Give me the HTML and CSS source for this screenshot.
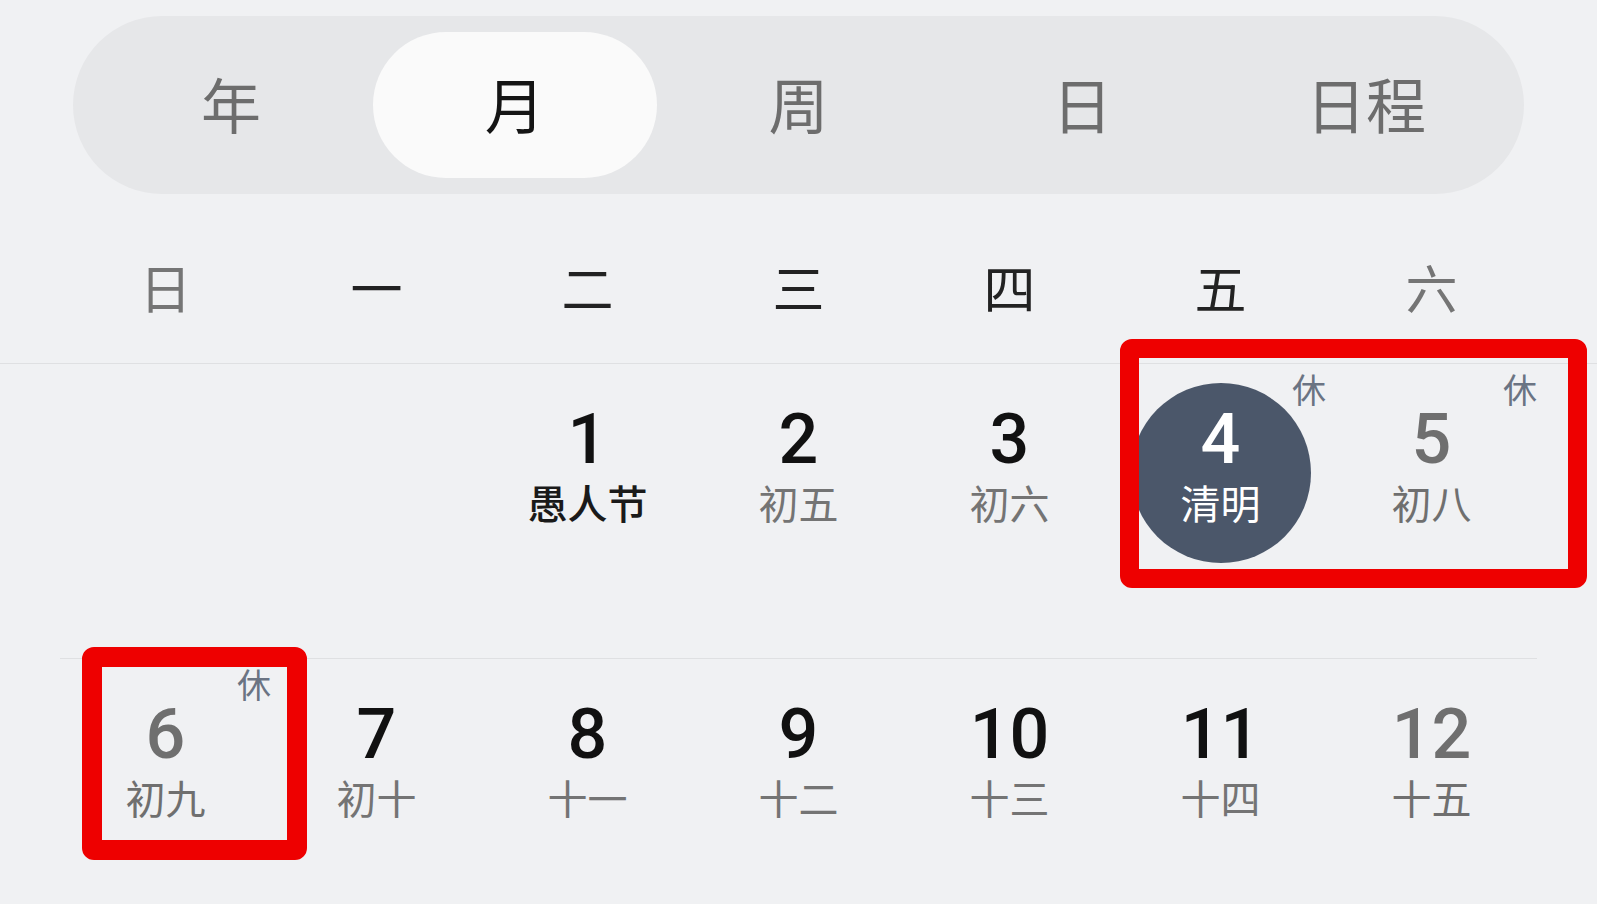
FILE: index.html
```html
<!DOCTYPE html>
<html lang="zh-CN">
<head>
<meta charset="utf-8">
<title>月视图</title>
<link rel="stylesheet" href="styles.css">
</head>
<body>
<div class="tabs">
  <div class="tab">年</div>
  <div class="tab active">月</div>
  <div class="tab">周</div>
  <div class="tab">日</div>
  <div class="tab">日程</div>
</div>

<div class="weekbar">
  <div class="weekdays">
    <span class="wk weekend">日</span>
    <span class="wk">一</span>
    <span class="wk">二</span>
    <span class="wk">三</span>
    <span class="wk">四</span>
    <span class="wk">五</span>
    <span class="wk weekend">六</span>
  </div>
</div>

<div class="weeks">
  <div class="week first">
    <div class="cell"></div>
    <div class="cell"></div>
    <div class="cell"><div class="day"><span class="num">1</span><span class="lunar fest">愚人节</span></div></div>
    <div class="cell"><div class="day"><span class="num">2</span><span class="lunar">初五</span></div></div>
    <div class="cell"><div class="day"><span class="num">3</span><span class="lunar">初六</span></div></div>
    <div class="cell"><span class="rest">休</span><div class="day today"><span class="num">4</span><span class="lunar">清明</span></div></div>
    <div class="cell weekend"><span class="rest">休</span><div class="day"><span class="num">5</span><span class="lunar">初八</span></div></div>
  </div>
  <div class="week last">
    <div class="cell weekend"><span class="rest">休</span><div class="day"><span class="num">6</span><span class="lunar">初九</span></div></div>
    <div class="cell"><div class="day"><span class="num">7</span><span class="lunar">初十</span></div></div>
    <div class="cell"><div class="day"><span class="num">8</span><span class="lunar">十一</span></div></div>
    <div class="cell"><div class="day"><span class="num">9</span><span class="lunar">十二</span></div></div>
    <div class="cell"><div class="day"><span class="num">10</span><span class="lunar">十三</span></div></div>
    <div class="cell"><div class="day"><span class="num">11</span><span class="lunar">十四</span></div></div>
    <div class="cell weekend"><div class="day"><span class="num">12</span><span class="lunar">十五</span></div></div>
  </div>
</div>

<div class="mark mark-a"></div>
<div class="mark mark-b"></div>
</body>
</html>
```

FILE: styles.css
```css
html, body {
  margin: 0;
  padding: 0;
}

body {
  position: relative;
  width: 1597px;
  height: 904px;
  overflow: hidden;
  background: #f0f1f3;
  font-family: "Noto Sans CJK SC", "Noto Sans", sans-serif;
  color: #111;
}

.tabs {
  margin: 16px 73px 0;
  height: 178px;
  padding: 16px;
  box-sizing: border-box;
  display: grid;
  grid-template-columns: repeat(5, 1fr);
  background: #e6e7e9;
  border-radius: 89px;
}

.tab {
  line-height: 142px;
  padding-bottom: 4px;
  text-align: center;
  font-size: 60px;
  color: #6d6d6d;
  border-radius: 73px;
}

.tab.active {
  background: #fafafa;
  color: #151515;
}

.weekbar {
  padding: 24px 60px 0;
  border-bottom: 1px solid #dfe0e2;
}

.weekdays {
  display: grid;
  grid-template-columns: repeat(7, 1fr);
  line-height: 137px;
  padding-bottom: 8px;
  font-size: 52px;
  text-align: center;
}

.wk {
  color: #222;
}

.wk.weekend {
  color: #757575;
}

.weeks {
  padding: 0 60px;
}

.week {
  display: grid;
  grid-template-columns: repeat(7, 1fr);
  height: 295px;
  box-sizing: border-box;
}

.week.first {
  border-bottom: 1px solid #dfe0e2;
}

.week.last {
  height: 245px;
}

.cell {
  position: relative;
  display: flex;
  flex-direction: column;
  align-items: center;
  padding-top: 19px;
}

.day {
  width: 180px;
  height: 180px;
  box-sizing: border-box;
  padding-top: 21px;
  display: flex;
  flex-direction: column;
  align-items: center;
  border-radius: 50%;
}

.num {
  font-family: Roboto, "Liberation Sans", sans-serif;
  font-weight: 500;
  font-size: 70px;
  line-height: 70px;
  color: #111;
}

.lunar {
  margin-top: 8px;
  font-size: 40px;
  line-height: 40px;
  color: #747474;
}

.lunar.fest {
  color: #1a1a1a;
  font-weight: 500;
}

.weekend .num,
.weekend .lunar {
  color: #6f6f6f;
}

.day.today {
  background: #4b576a;
}

.day.today .num,
.day.today .lunar {
  color: #ffffff;
}

.rest {
  position: absolute;
  top: 8px;
  right: 0;
  font-size: 34px;
  line-height: 34px;
  color: #6b7483;
}

.mark {
  position: absolute;
  box-sizing: border-box;
  border: 19px solid #ee0000;
  border-radius: 12px;
}

.mark-a {
  left: 1120px;
  top: 339px;
  width: 467px;
  height: 249px;
}

.mark-b {
  left: 82px;
  top: 647px;
  width: 225px;
  height: 213px;
  border-width: 20px;
}
```
